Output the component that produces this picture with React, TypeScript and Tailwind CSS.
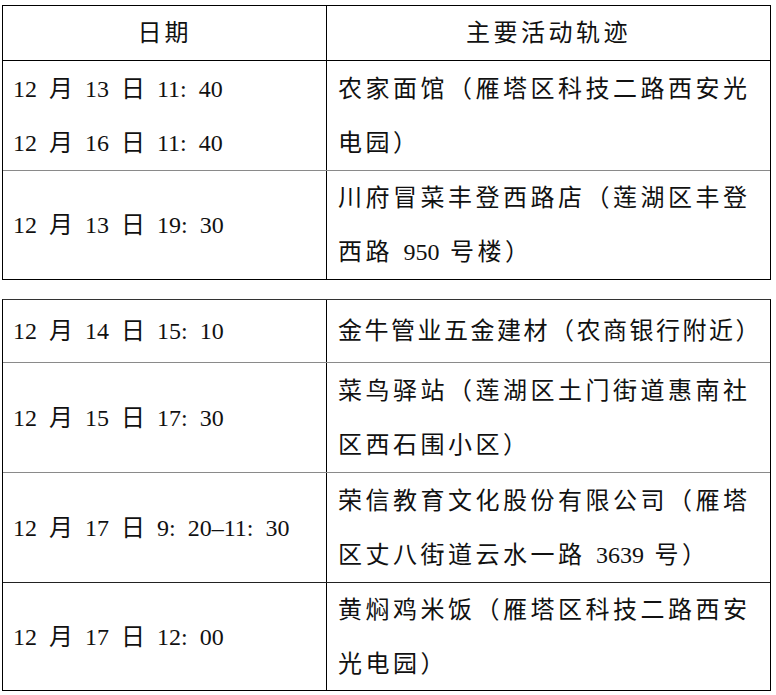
type Row = {
  date: string[];
  place: string[];
  h: string;
  divider?: string;
  tight?: boolean;
};

const tableOne: Row[] = [
  {
    date: ['12 月 13 日 11: 40', '12 月 16 日 11: 40'],
    place: ['农家面馆（雁塔区科技二路西安光', '电园）'],
    h: 'h-[110px]',
    divider: 'border-black',
  },
  {
    date: ['12 月 13 日 19: 30'],
    place: ['川府冒菜丰登西路店（莲湖区丰登', '西路 950 号楼）'],
    h: 'h-[109px]',
    divider: 'border-[#8a8a8a]',
  },
];

const tableTwo: Row[] = [
  {
    date: ['12 月 14 日 15: 10'],
    place: ['金牛管业五金建材（农商银行附近）'],
    h: 'h-[62px]',
    tight: true,
  },
  {
    date: ['12 月 15 日 17: 30'],
    place: ['菜鸟驿站（莲湖区土门街道惠南社', '区西石围小区）'],
    h: 'h-[110px]',
    divider: 'border-[#8a8a8a]',
  },
  {
    date: ['12 月 17 日 9: 20–11: 30'],
    place: ['荣信教育文化股份有限公司（雁塔', '区丈八街道云水一路 3639 号）'],
    h: 'h-[110px]',
    divider: 'border-[#8a8a8a]',
  },
  {
    date: ['12 月 17 日 12: 00'],
    place: ['黄焖鸡米饭（雁塔区科技二路西安', '光电园）'],
    h: 'h-[108px]',
    divider: 'border-[#222]',
  },
];

// latin digits sit tight, CJK text is spaced out
function Spaced({ text }: { text: string }) {
  const parts = text.split(/([0-9]+)/);
  return (
    <>
      {parts.map((p, i) =>
        /^[0-9]+$/.test(p) ? (
          <span key={i} className="tracking-normal">
            {p}
          </span>
        ) : (
          <span key={i}>{p}</span>
        ),
      )}
    </>
  );
}

function TableRow({ row }: { row: Row }) {
  return (
    <div className={`flex ${row.h} ${row.divider ? `border-t ${row.divider}` : ''}`}>
      <div className="w-[324px] shrink-0 border-r border-black flex flex-col justify-center pl-[10px]">
        {row.date.map((d) => (
          <div key={d} className="leading-[54px] tracking-normal [word-spacing:6px] whitespace-pre">
            {d}
          </div>
        ))}
      </div>
      <div className="flex-1 flex flex-col justify-center pl-[11px]">
        {row.place.map((p) => (
          <div
            key={p}
            className={`leading-[54px] whitespace-pre [word-spacing:1px] ${row.tight ? 'tracking-[2.5px]' : 'tracking-[3.5px]'}`}
          >
            <Spaced text={p} />
          </div>
        ))}
      </div>
    </div>
  );
}

export default function App() {
  return (
    <div className="min-h-screen bg-white pt-[5px] pl-[2px] text-[24px] text-[#111] font-['Liberation_Serif','Noto_Sans_CJK_SC',serif]">
      <div className="w-[769px]">
        <div className="border border-black">
          <div className="flex h-[54px]">
            <div className="w-[324px] shrink-0 border-r border-black flex items-center justify-center tracking-[3px]">
              日期
            </div>
            <div className="flex-1 flex items-center justify-center tracking-[3.5px]">主要活动轨迹</div>
          </div>
          {tableOne.map((r, i) => (
            <TableRow key={i} row={r} />
          ))}
        </div>

        <div className="mt-[19px] border border-black border-t-[#333]">
          {tableTwo.map((r, i) => (
            <TableRow key={i} row={r} />
          ))}
        </div>
      </div>
    </div>
  );
}
